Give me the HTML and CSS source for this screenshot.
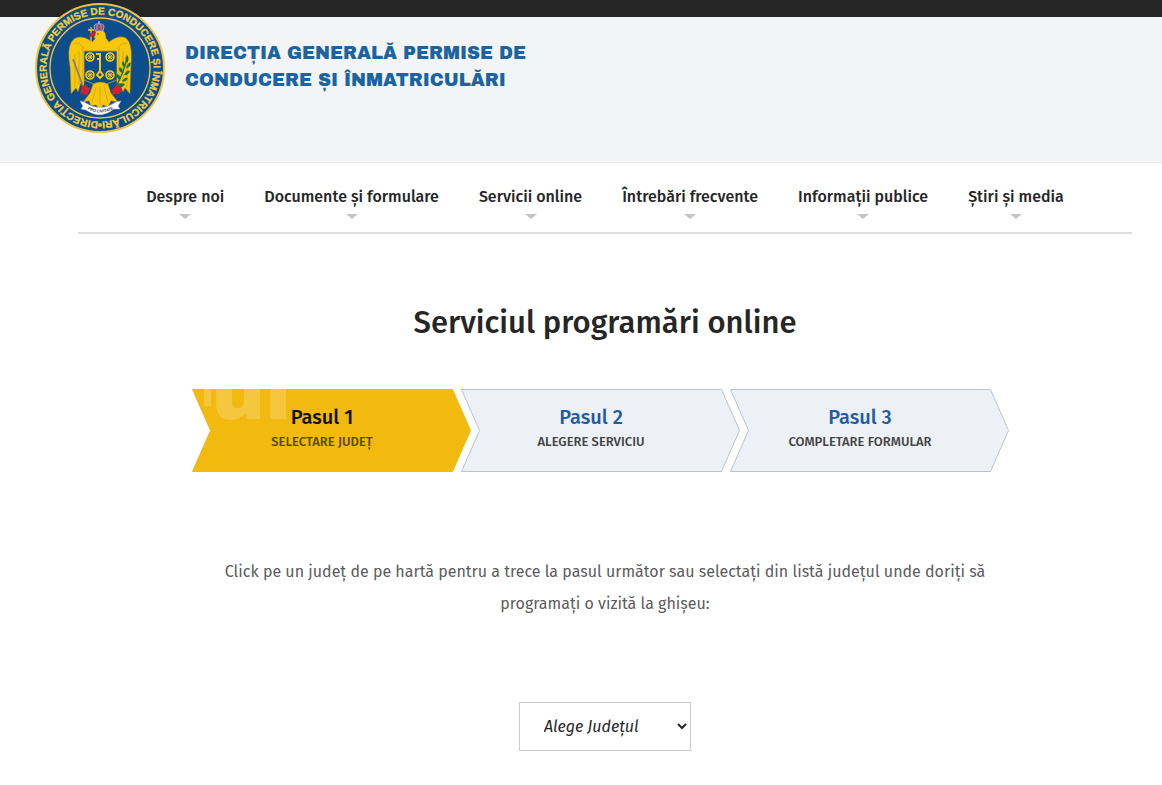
FILE: index.html
```html
<!DOCTYPE html>
<html lang="ro">
<head>
    <meta charset="utf-8">
    <meta name="viewport" content="width=device-width, initial-scale=1">
    <title>Serviciul programări online</title>
    <link rel="stylesheet" href="styles.css">
</head>
<body>
    <div class="topbar"></div>

    <header class="header">
        <a class="brand" href="#">
            <svg class="logo" viewBox="0 0 130 130" role="img" aria-label="DGPCI">
                <defs>
                    <path id="ring" d="M65 118.5A53.5 53.5 0 1 1 65.1 118.5"/>
                    <g id="wheel" fill="none" stroke="#f8c70c">
                        <circle r="4" stroke-width="1.6"/>
                        <path d="M-4 0H4M0-4V4M-3-3L3 3M-3 3L3-3" stroke-width="1"/>
                    </g>
                </defs>
                <circle cx="65" cy="65" r="64" fill="#0d4d8b" stroke="#e9c545" stroke-width="2"/>
                <circle cx="65" cy="65" r="50" fill="none" stroke="#e9c545" stroke-width="1.4"/>
                <text class="ring-text"><textPath href="#ring" startOffset="50%">DIRECȚIA GENERALĂ PERMISE DE CONDUCERE ȘI ÎNMATRICULĂRI</textPath></text>
                <circle cx="65" cy="122" r="2" fill="#d9bd45"/>
                <!-- eagle -->
                <path fill="#f8c70c" stroke="#7b6a26" stroke-width=".5" d="M60 36C58 31 60 27 65 27C69 27 71 30 71 35L74 39C80 34 88 32 92 36C97 41 97 53 96 64L95 91L90 85L88 89L84 80L82 83L81 48H50L49 84L46 80L43 89L41 85L36 91L35 64C33 52 33 42 38 37C43 32 51 34 57 39Z"/>
                <path fill="none" stroke="#b79820" stroke-width=".6" d="M40 51V84M44 48V82M48 44V76M84 45V76M88 48V82M92 51V84M39 41Q44 38 49 46M92 41Q87 38 82 46"/>
                <path fill="#0d4d8b" stroke="#d6b92f" stroke-width=".7" d="M49 48H82V77Q73 80 65.500 84Q57 80 49 77Z"/>
                <path fill="#f8c70c" stroke="#7b6a26" stroke-width=".5" d="M58 81Q65 77 73 81L76 90L83 99L76 98L73 104L68 102L65 107L61 102L56 103L54 98L48 99L55 90Z"/>
                <path fill="none" stroke="#b79820" stroke-width=".6" d="M65 83V102M61 84L57 99M69 84L73 99"/>
                <use href="#wheel" x="55" y="54"/>
                <use href="#wheel" x="75" y="54"/>
                <use href="#wheel" x="55" y="72"/>
                <use href="#wheel" x="75" y="72"/>
                <path fill="none" stroke="#f8c70c" stroke-width="2" d="M65 69V51H61M65 56H62M65 68L68 72L65 75L62 72Z"/>
                <!-- crown, cross, beak -->
                <path fill="#8d4a68" stroke="#b9bfd6" stroke-width=".8" d="M60 28L59 23Q60 20 64 21Q68 20 69 23L68 28ZM62 27L62 22M66 27V22"/>
                <path stroke="#d8d9e4" stroke-width="1.2" d="M64 18V21"/>
                <path fill="none" stroke="#e9c545" stroke-width="1.3" d="M56 24V40M53 27H59"/>
                <path fill="#c9202d" d="M55 30L61 29L60 33L54 34Z"/>
                <circle cx="63" cy="31" r=".7" fill="#333"/>
                <!-- sword and laurel -->
                <path stroke="#817f8d" stroke-width="1.8" d="M38 56L49 86"/>
                <path stroke="#187438" stroke-width="1.2" fill="none" d="M80 85Q88 72 92 55"/>
                <path fill="#187438" d="M92 60Q89 56 92 52Q95 56 92 60M90 65Q85 61 88 58Q91 62 90 65M91 65Q93 59 96 60Q95 65 91 65M88 71Q82 67 85 64Q89 67 88 71M89 72Q92 66 95 68Q93 73 89 72M85 78Q80 73 82 71Q87 73 85 78M87 78Q90 73 93 75Q90 80 87 78M83 83Q84 79 90 81Q88 86 83 83"/>
                <path fill="#cf2333" d="M47 83L51 82L55 86L53 91L50 92L47 90L45 92L46 87ZM77 87L82 82L86 84L87 88L84 91L80 91L78 93Z"/>
                <path fill="#fff" stroke="#b7bec8" stroke-width=".5" d="M45 98L49 99Q65 110 81 99L86 98L83 103L85 106L79 106Q65 117 51 107L46 106L48 103Z"/>
                <path id="scroll" fill="none" d="M51 105Q65 114 80 105"/>
                <text class="scroll-text"><textPath href="#scroll" startOffset="50%">PRO CIVITATE</textPath></text>
            </svg>
            <span class="brand-name">DIRECȚIA GENERALĂ PERMISE DE CONDUCERE ȘI ÎNMATRICULĂRI</span>
        </a>
    </header>

    <div class="container">
        <nav class="menu">
            <a href="#">Despre noi</a>
            <a href="#">Documente și formulare</a>
            <a href="#">Servicii online</a>
            <a href="#">Întrebări frecvente</a>
            <a href="#">Informații publice</a>
            <a href="#">Știri și media</a>
        </nav>

        <main class="content">
            <h1>Serviciul programări online</h1>

            <ol class="steps">
                <li class="step active">
                    <svg class="step-shape" viewBox="0 0 279 83" preserveAspectRatio="none" aria-hidden="true">
                        <path d="M0.5 0.5H260.5L278.5 41.5L260.5 82.5H0.5L18.5 41.5Z"/>
                    </svg>
                    <span class="step-ghost" aria-hidden="true">ul</span>
                    <span class="step-title">Pasul 1</span>
                    <span class="step-text">SELECTARE JUDEȚ</span>
                </li>
                <li class="step">
                    <svg class="step-shape" viewBox="0 0 279 83" preserveAspectRatio="none" aria-hidden="true">
                        <path d="M0.5 0.5H260.5L278.5 41.5L260.5 82.5H0.5L18.5 41.5Z"/>
                    </svg>
                    <span class="step-title">Pasul 2</span>
                    <span class="step-text">ALEGERE SERVICIU</span>
                </li>
                <li class="step">
                    <svg class="step-shape" viewBox="0 0 279 83" preserveAspectRatio="none" aria-hidden="true">
                        <path d="M0.5 0.5H260.5L278.5 41.5L260.5 82.5H0.5L18.5 41.5Z"/>
                    </svg>
                    <span class="step-title">Pasul 3</span>
                    <span class="step-text">COMPLETARE FORMULAR</span>
                </li>
            </ol>

            <label class="intro" for="judet">Click pe un județ de pe hartă pentru a trece la pasul următor sau selectați din listă județul unde doriți să programați o vizită la ghișeu:</label>

            <select class="county" id="judet">
                <option>Alege Județul</option>
            </select>
        </main>
    </div>
</body>
</html>
```
FILE: styles.css
```css
* {
    box-sizing: border-box;
}
body {
    margin: 0;
    background-color: #fff;
    color: #262626;
    font-family: "Fira Sans", "Noto Sans", sans-serif;
    font-size: 16px;
}
.topbar {
    height: 17px;
    background-color: #262626;
}
.header {
    display: flex;
    background-color: #f2f4f6;
    border-bottom: 1px solid #e9ebed;
    padding: 0 35px 29px;
}
.brand {
    display: flex;
    align-items: center;
    gap: 20px;
    text-decoration: none;
    margin-top: -14px;
}
.logo {
    width: 130px;
    height: 130px;
    flex: none;
}
.ring-text {
    font: bold 10px "Liberation Sans", Arial, sans-serif;
    fill: #f3cf3d;
    stroke: #f3cf3d;
    stroke-width: 0.3;
    text-anchor: middle;
}
.scroll-text {
    font: bold 4px "Liberation Sans", Arial, sans-serif;
    fill: #333;
    text-anchor: middle;
}
.brand-name {
    max-width: 360px;
    padding-bottom: 2px;
    color: #1b649f;
    font-family: "Archivo Black", Inter, sans-serif;
    font-size: 18px;
    font-weight: 400;
    line-height: 27px;
}
.container {
    padding: 0 30px 0 78px;
}
.menu {
    display: flex;
    justify-content: center;
    gap: 40px;
    padding: 22px 0 13px;
    border-bottom: 2px solid #dedede;
}
.menu a {
    display: flex;
    flex-direction: column;
    align-items: center;
    gap: 5px;
    color: #262626;
    font-weight: 500;
    line-height: 24px;
    text-decoration: none;
    white-space: nowrap;
}
.menu a::after {
    content: "";
    border: 6px solid transparent;
    border-top: 5px solid #c4c4c4;
    border-bottom: 0;
}
.content {
    display: flex;
    flex-direction: column;
    align-items: center;
}
h1 {
    margin: 67px 0 44px;
    font-size: 31px;
    font-weight: 500;
    line-height: 44px;
}
.steps {
    display: flex;
    width: 100%;
    max-width: 817px;
    margin: 0 10px 0 0;
    padding: 0;
    list-style: none;
}
.step {
    position: relative;
    flex: 1;
    display: flex;
    flex-direction: column;
    align-items: center;
    padding: 14px 18px 20px 0;
    overflow: hidden;
}
.step + .step {
    margin-left: -10px;
}
.step-shape {
    position: absolute;
    inset: 0;
    width: 100%;
    height: 100%;
    fill: #edf1f5;
    stroke: #b7c3cd;
}
/* oversized watermark, cropped by the top of the step */
.step-ghost {
    position: absolute;
    left: 20px;
    top: -56px;
    color: rgba(255, 255, 255, 0.2);
    font-family: "Archivo Black", Inter, sans-serif;
    font-size: 80px;
    line-height: 120px;
}
.step-ghost::before {
    content: "";
    position: absolute;
    left: -8px;
    top: 56px;
    width: 7px;
    height: 17px;
    background-color: currentColor;
}
.step-title {
    position: relative;
    color: #1f5c9f;
    font-size: 20px;
    font-weight: 500;
    line-height: 28px;
}
.step-text {
    position: relative;
    color: #444;
    font-size: 13px;
    font-weight: 500;
    line-height: 21px;
}
.step.active .step-shape {
    fill: #f2b90f;
    stroke: #f2b90f;
}
.step.active .step-title {
    color: #111;
}
.step.active .step-text {
    color: #5b4712;
}
.intro {
    max-width: 800px;
    margin: 84px 0 82px;
    color: #5c5c5c;
    line-height: 32px;
    text-align: center;
}
.county {
    width: 172px;
    height: 49px;
    padding: 0 0 0 20px;
    border: 1px solid #ccc;
    border-radius: 0;
    background-color: #fff;
    color: #262626;
    font-family: inherit;
    font-size: 16px;
    font-style: italic;
}
```
